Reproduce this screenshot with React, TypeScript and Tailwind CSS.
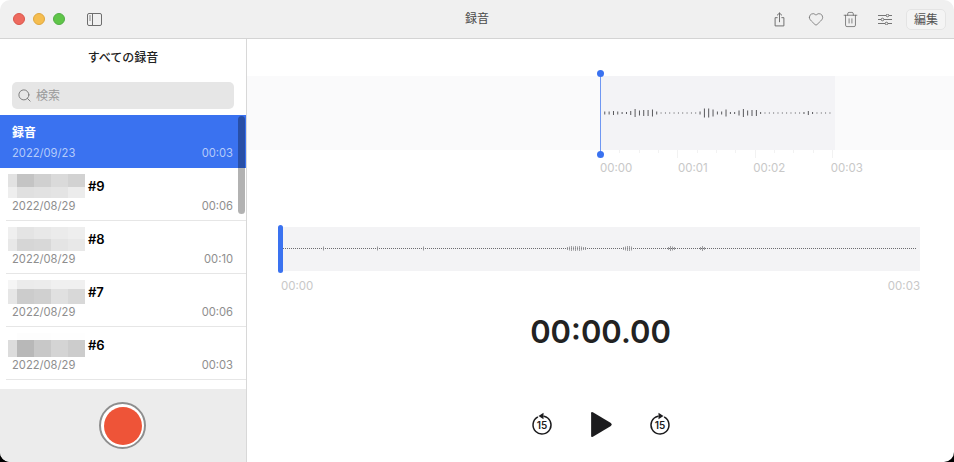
import { Heart, Search, Trash2 } from "lucide-react";

const font = "font-['Inter','Noto_Sans_CJK_JP',sans-serif]";

const recordings = [
  {
    name: "#9",
    date: "2022/08/29",
    time: "00:06",
    topH: "h-[13px]",
    bottomH: "h-[11px]",
    top: ["bg-[#e2e2e2]", "bg-[#c4c4c4]", "bg-[#d0d0d0]", "bg-[#dadada]", "bg-[#d2d2d2]"],
    bottom: ["bg-[#eeeeee]", "bg-[#e0e0e0]", "bg-[#e2e2e2]", "bg-[#e4e4e4]", "bg-[#ececec]"],
  },
  {
    name: "#8",
    date: "2022/08/29",
    time: "00:10",
    topH: "h-[12px]",
    bottomH: "h-[12px]",
    top: ["bg-[#efefef]", "bg-[#e4e4e4]", "bg-[#e8e8e8]", "bg-[#ebebeb]", "bg-[#eeeeee]"],
    bottom: ["bg-[#e8e8e8]", "bg-[#d6d6d6]", "bg-[#d8d8d8]", "bg-[#e4e4e4]", "bg-[#e8e8e8]"],
  },
  {
    name: "#7",
    date: "2022/08/29",
    time: "00:06",
    topH: "h-[9px]",
    bottomH: "h-[15px]",
    top: ["bg-[#f5f5f5]", "bg-[#ebebeb]", "bg-[#ececec]", "bg-[#f0f0f0]", "bg-[#f0f0f0]"],
    bottom: ["bg-[#e6e6e6]", "bg-[#cccccc]", "bg-[#d0d0d0]", "bg-[#e0e0e0]", "bg-[#d8d8d8]"],
  },
  {
    name: "#6",
    date: "2022/08/29",
    time: "00:03",
    topH: "h-[7px]",
    bottomH: "h-[17px]",
    top: ["bg-[#ffffff]", "bg-[#fdfdfd]", "bg-[#fdfdfd]", "bg-[#fefefe]", "bg-[#fefefe]"],
    bottom: ["bg-[#dcdcdc]", "bg-[#b8b8b8]", "bg-[#c8c8c8]", "bg-[#d4d4d4]", "bg-[#cccccc]"],
  },
];

// bar heights of the top waveform, one every 4.33px
const topWave = [
  1, 3, 3, 4, 3, 2, 2, 4, 8, 5, 6, 6, 7, 3, 1, 1, 1, 1, 1, 1, 1, 1, 1, 3, 9, 9, 7, 3, 3, 7, 2, 2, 5, 8, 5, 6, 6, 2, 1, 1,
  1, 1, 1, 1, 1, 1, 1, 2, 4, 2, 1, 1, 1, 1,
];

// x offset -> height for the bumps in the long waveform, the rest is a dotted line
const longBumps: Record<number, number> = {
  40: 4, 94: 4, 140: 4,
  284: 3, 286: 4, 288: 5, 290: 4, 292: 5, 294: 4, 296: 5, 298: 4, 300: 3, 302: 3,
  340: 3, 342: 4, 344: 5, 346: 5, 348: 4,
  385: 3, 387: 5, 389: 4, 391: 3,
  417: 3, 419: 5, 421: 3,
};

function Traffic() {
  return (
    <div className="flex gap-[8px]">
      <div className="h-[12px] w-[12px] rounded-full border border-[#d9574c] bg-[#ee6a5f]" />
      <div className="h-[12px] w-[12px] rounded-full border border-[#dea73f] bg-[#f5bd4f]" />
      <div className="h-[12px] w-[12px] rounded-full border border-[#52ad46] bg-[#5fc548]" />
    </div>
  );
}

function SidebarIcon() {
  return (
    <svg width="15" height="13" viewBox="0 0 15 13" fill="none" stroke="#6e6e6e" strokeWidth="1">
      <rect x="0.5" y="0.5" width="14" height="12" rx="1.5" />
      <path d="M5.5 0.5v12" />
      <path d="M2 3h2M2 5h2M2 7h2" strokeWidth="0.8" />
    </svg>
  );
}

function ShareIcon() {
  return (
    <svg width="11" height="15" viewBox="0 0 12 16" fill="none" stroke="#666" strokeWidth="1" strokeLinecap="round" strokeLinejoin="round">
      <path d="M3.5 6H1.2v9h9.6V6H8.5" />
      <path d="M6 10.5V1M3.6 3.2 6 1l2.4 2.2" />
    </svg>
  );
}

function SlidersIcon() {
  return (
    <svg width="14" height="11" viewBox="0 0 14 11" fill="none" stroke="#666" strokeWidth="0.9">
      <path d="M0 1.5h8M11 1.5h3M0 5.5h3M6 5.5h8M0 9.5h7M10 9.5h4" />
      <circle cx="9.5" cy="1.5" r="1.3" />
      <circle cx="4.5" cy="5.5" r="1.3" />
      <circle cx="8.5" cy="9.5" r="1.3" />
    </svg>
  );
}

function SkipIcon({ forward }: { forward?: boolean }) {
  return (
    <svg width="22" height="25" viewBox="0 0 22 25" fill="none" className={font}>
      {forward ? (
        <>
          <path d="M9 4.2A9 9 0 1 0 15.5 5.2" stroke="#1c1c1e" strokeWidth="1.5" strokeLinecap="round" />
          <path d="M9.5 0.8 14.5 4 9.5 7.2Z" fill="#1c1c1e" />
        </>
      ) : (
        <>
          <path d="M13 4.2A9 9 0 1 1 6.5 5.2" stroke="#1c1c1e" strokeWidth="1.5" strokeLinecap="round" />
          <path d="M12.5 0.8 7.5 4 12.5 7.2Z" fill="#1c1c1e" />
        </>
      )}
      <text x="11" y="17.2" textAnchor="middle" fontSize="10" fontWeight="600" fill="#1c1c1e">
        15
      </text>
    </svg>
  );
}

function TopWave() {
  return (
    <svg width="235" height="74" viewBox="0 0 235 74" className="block">
      {topWave.map((h, i) => (
        <rect key={i} x={i * 4.33} y={37 - h / 2} width="0.9" height={h} fill="#48484c" />
      ))}
    </svg>
  );
}

function LongWave() {
  const bars = [];
  for (let x = 0; x < 634; x += 2) {
    bars.push(<rect key={x} x={x} y="21" width="1" height="1" fill="#6c6c70" />);
  }
  return (
    <svg width="634" height="44" viewBox="0 0 634 44" className="block">
      {bars}
      {Object.entries(longBumps).map(([x, h]) => (
        <rect key={x} x={Number(x)} y={21.5 - h / 2} width="0.8" height={h} fill="#8a8a8e" />
      ))}
    </svg>
  );
}

function RecordingRow({ r }: { r: (typeof recordings)[number] }) {
  return (
    <div className="ml-[6px] h-[53px] border-b border-[#e6e6e6]">
      <div className="flex items-end pt-[6px]">
        <div className="ml-[2px] w-[77px]">
          <div className={`flex ${r.topH}`}>
            {r.top.map((c, i) => (
              <div key={i} className={`${c} ${i === 0 ? "w-[9px]" : "w-[17px]"}`} />
            ))}
          </div>
          <div className={`flex ${r.bottomH}`}>
            {r.bottom.map((c, i) => (
              <div key={i} className={`${c} ${i === 0 ? "w-[9px]" : "w-[17px]"}`} />
            ))}
          </div>
        </div>
        <span className="mb-[4px] ml-[3px] text-[13px] font-semibold leading-[16px] text-black">{r.name}</span>
      </div>
      <div className="mt-[1px] flex justify-between pl-[6px] pr-[13px] text-[11.2px] leading-[14px] text-[#8e8e8e]">
        <span>{r.date}</span>
        <span>{r.time}</span>
      </div>
    </div>
  );
}

export default function App() {
  return (
    <div className={`${font} h-[462px] w-[954px] overflow-hidden bg-linear-to-b from-white from-50% to-black to-50%`}>
      <div className="flex h-full w-full flex-col overflow-hidden rounded-[10px] bg-white">
        {/* Title bar */}
        <header className="flex h-[39px] shrink-0 items-center border-b border-[#d4d4d4] bg-[#f0f0f0] pl-[13px] pr-[8px]">
          <div className="flex flex-1 items-center">
            <Traffic />
            <div className="ml-[22px]">
              <SidebarIcon />
            </div>
          </div>
          <div className="mr-[5px] text-center text-[12px] text-[#4a4a4a]">録音</div>
          <div className="flex flex-1 items-center justify-end">
            <ShareIcon />
            <Heart className="ml-[23px] h-[16px] w-[16px] text-[#666]" strokeWidth={1.1} />
            <Trash2 className="ml-[18px] h-[17px] w-[17px] text-[#666]" strokeWidth={1.1} />
            <div className="ml-[19px]">
              <SlidersIcon />
            </div>
            <div className="ml-[14px] rounded-[5px] border border-[#e4e4e4] bg-[#f4f4f4] px-[7px] py-[1px] text-[12px] leading-[17px] text-[#555]">
              編集
            </div>
          </div>
        </header>

        <div className="flex min-h-0 flex-1">
          {/* Sidebar */}
          <aside className="flex w-[247px] shrink-0 flex-col border-r border-[#d8d8d8]">
            <div className="px-[12px] pt-[10px]">
              <div className="text-center text-[12px] font-medium leading-[18px] text-[#222]">すべての録音</div>
              <div className="mt-[15px] flex h-[27px] items-center gap-[4px] rounded-[5px] bg-[#e6e6e6] pl-[5px] text-[12px] text-[#9a9a9a]">
                <Search className="h-[15px] w-[15px] text-[#777]" strokeWidth={1.5} />
                検索
              </div>
            </div>
            <div className="relative mt-[6px] min-h-0 flex-1 overflow-hidden">
              <div className="h-[53px] bg-[#3a72f0] pl-[12px] pr-[13px] pt-[9px] text-white">
                <div className="text-[12px] font-bold leading-[17px]">録音</div>
                <div className="mt-[5px] flex justify-between text-[11.2px] leading-[14px] text-[#b5cbfa]">
                  <span>2022/09/23</span>
                  <span>00:03</span>
                </div>
              </div>
              {recordings.map((r) => (
                <RecordingRow key={r.name} r={r} />
              ))}
              {/* overlay scrollbar */}
              <div className="absolute right-[1px] top-[1px] h-[98px] w-[7px] rounded-full bg-black/30" />
            </div>
            <div className="flex h-[73px] shrink-0 items-center justify-center bg-[#ececec] pr-[1px]">
              <div className="flex h-[47px] w-[47px] items-center justify-center rounded-full border-2 border-[#8e8e8e] bg-white">
                <div className="h-[38px] w-[38px] rounded-full bg-[#ee5438]" />
              </div>
            </div>
          </aside>

          {/* Main */}
          <main className="flex min-w-0 flex-1 flex-col">
            <div className="mt-[37px] flex h-[74px] bg-[#fafafb] pl-[353px]">
              <div className="relative h-full w-[235px] bg-[#f3f3f6]">
                <TopWave />
                <div className="absolute -bottom-[4px] -top-[3px] left-0 w-px bg-[#6f97f2]" />
                <div className="absolute -left-[3px] -top-[6px] h-[7px] w-[7px] rounded-full bg-[#3a72f0]" />
                <div className="absolute -bottom-[8px] -left-[3px] h-[7px] w-[7px] rounded-full bg-[#3a72f0]" />
              </div>
            </div>
            <div className="ml-[353px] flex h-[10px] w-[233px] justify-between">
              {Array.from({ length: 13 }).map((_, i) => (
                <div key={i} className={`w-px bg-[#f2f2f2] ${i % 4 === 0 ? "h-[8px]" : "h-[3px]"}`} />
              ))}
            </div>
            <div className="ml-[353px] mt-[1px] flex w-[263px] justify-between text-[11.5px] leading-[14px] text-[#c8c8c8]">
              <span>00:00</span>
              <span>00:01</span>
              <span>00:02</span>
              <span>00:03</span>
            </div>

            <div className="relative ml-[32px] mr-[34px] mt-[52px] h-[44px] bg-[#f3f3f5] pl-[4px]">
              <LongWave />
              <div className="absolute -bottom-[2px] -left-px -top-[2px] w-[5px] rounded-full bg-[#3a72f0]" />
            </div>
            <div className="ml-[34px] mr-[34px] mt-[8px] flex justify-between text-[11.5px] leading-[14px] text-[#c8c8c8]">
              <span>00:00</span>
              <span>00:03</span>
            </div>

            <div className="mt-[19px] text-center text-[31px] font-semibold leading-[40px] text-[#222]">00:00.00</div>

            <div className="mt-[59px] flex items-center justify-center gap-[36px]">
              <SkipIcon />
              <svg width="24" height="27" viewBox="0 0 26 30">
                <path d="M2 2.5 Q2 0.5 4 1.5 L24 13.2 Q26 15 24 16.8 L4 28.5 Q2 29.5 2 27.5 Z" fill="#1c1c1e" />
              </svg>
              <SkipIcon forward />
            </div>
          </main>
        </div>
      </div>
    </div>
  );
}
